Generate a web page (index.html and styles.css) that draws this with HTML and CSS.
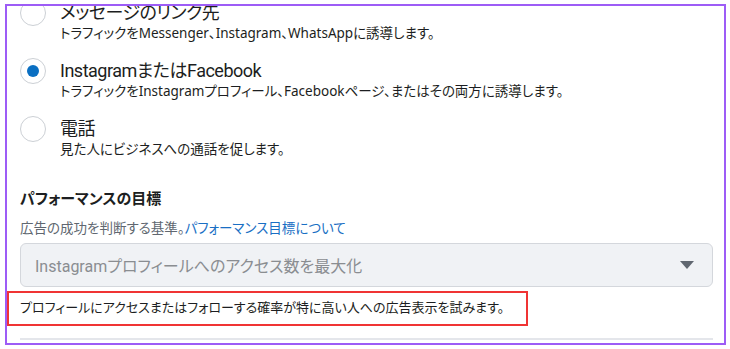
FILE: index.html
```html
<!DOCTYPE html>
<html>
<head>
    <title>パフォーマンスの目標</title>
    <link rel="stylesheet" href="styles.css">
</head>
<body>
    <div class="frame">
        <div class="options">
            <div class="option">
                <span class="radio"></span>
                <div class="option-text">
                    <div class="option-title">メッセージのリンク先</div>
                    <div class="option-desc">トラフィックをMessenger、Instagram、WhatsAppに誘導します。</div>
                </div>
            </div>
            <div class="option">
                <span class="radio checked"></span>
                <div class="option-text">
                    <div class="option-title">InstagramまたはFacebook</div>
                    <div class="option-desc">トラフィックをInstagramプロフィール、Facebookページ、またはその両方に誘導します。</div>
                </div>
            </div>
            <div class="option">
                <span class="radio"></span>
                <div class="option-text">
                    <div class="option-title">電話</div>
                    <div class="option-desc">見た人にビジネスへの通話を促します。</div>
                </div>
            </div>
        </div>

        <h2 class="section-title">パフォーマンスの目標</h2>
        <p class="section-sub">広告の成功を判断する基準。<a href="#">パフォーマンス目標について</a></p>

        <div class="select">
            <span>Instagramプロフィールへのアクセス数を最大化</span>
            <svg class="caret" width="14" height="8" viewBox="0 0 14 8"><path d="M0 0h14L7 8z" fill="#606770"/></svg>
        </div>

        <div class="hint">プロフィールにアクセスまたはフォローする確率が特に高い人への広告表示を試みます。</div>

        <div class="divider"></div>
    </div>
</body>
</html>
```

FILE: styles.css
```css
body {
    margin: 0;
    background: #fff;
    font-family: Roboto, 'Noto Sans CJK JP', sans-serif;
    font-feature-settings: "palt";
    color: #1c1e21;
}
.frame {
    box-sizing: border-box;
    width: 721px;
    height: 341px;
    margin: 4px 0 0 5px;
    border: 2px solid #9d5cf6;
    padding: 0 11px 0 13px;
    overflow: hidden;
}
.options {
    margin-top: -4px;
    display: flex;
    flex-direction: column;
    gap: 18px;
}
.option {
    display: flex;
    align-items: flex-start;
    gap: 14px;
}
.radio {
    box-sizing: border-box;
    flex: none;
    width: 26px;
    height: 26px;
    margin-top: -2px;
    border: 1.5px solid #ccd0d5;
    border-radius: 50%;
    display: flex;
    align-items: center;
    justify-content: center;
}
.radio.checked::after {
    content: '';
    width: 12px;
    height: 12px;
    border-radius: 50%;
    background: #0a6fc2;
}
.option-title {
    font-size: 18px;
    line-height: 22px;
    letter-spacing: -0.5px;
}
.option-desc {
    font-family: 'Noto Sans', 'Noto Sans CJK JP', sans-serif;
    font-size: 13.5px;
    line-height: 18px;
}
.section-title {
    margin: 30px 0 0;
    font-size: 15px;
    font-weight: bold;
    line-height: 22px;
}
.section-sub {
    margin: 9px 0 0;
    font-size: 13.5px;
    line-height: 18px;
    color: #606770;
}
.section-sub a {
    color: #1a6fc4;
    text-decoration: none;
}
.select {
    box-sizing: border-box;
    height: 44px;
    margin-top: 6px;
    padding: 0 18px 0 14px;
    background: #f0f2f5;
    border: 1px solid #d4d7dc;
    border-radius: 6px;
    display: flex;
    align-items: center;
    justify-content: space-between;
    font-size: 16px;
    color: #8a8d91;
}
.hint {
    display: inline-block;
    margin: 4px 0 0 -13px;
    padding: 6px 22px 7px 11px;
    border: 2px solid #f03434;
    font-size: 13px;
    line-height: 18px;
    color: #1c1e21;
}
.divider {
    margin-top: 12px;
    height: 2px;
    background: #e4e6eb;
}
```
